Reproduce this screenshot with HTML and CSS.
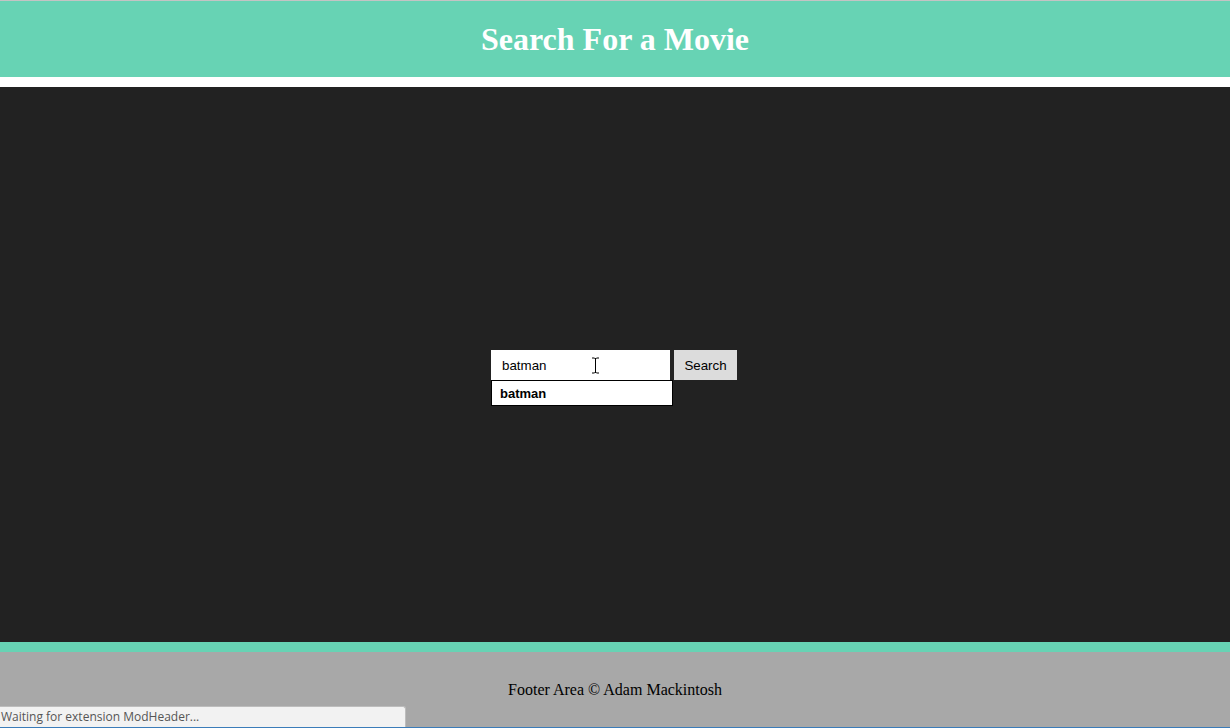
FILE: index.html
```html
<!DOCTYPE html>
<html>
<head>
<meta charset="utf-8">
<title>Search For a Movie</title>
<link rel="stylesheet" href="styles.css">
</head>
<body>
<header class="header"><h1 class="title">Search For a Movie</h1></header>
<main class="main">
  <form class="search">
    <div class="field">
      <input class="input" type="text" value="batman">
      <ul class="suggest"><li class="suggest-item">batman</li></ul>
      <svg class="cursor" width="9" height="17" viewBox="0 0 9 17"><path d="M1 1h2.5M5.5 1H8M4.5 1.5v14M1 16h2.5M5.5 16H8M3.5 1.5h2M3.5 15.5h2" stroke="#000" stroke-width="1" fill="none"/></svg>
    </div>
    <button class="btn" type="button">Search</button>
  </form>
</main>
<footer class="footer"><p class="footer-text">Footer Area © Adam Mackintosh</p></footer>
<div class="status">Waiting for extension ModHeader...</div>
<div class="bottom-line"></div>
</body>
</html>
```

FILE: styles.css
```css
html, body { margin: 0; padding: 0; height: 100%; }
body {
  display: flex;
  flex-direction: column;
  height: 728px;
  overflow: hidden;
  background: #fff;
  font-family: "Liberation Serif", serif;
  border-top: 1px solid #c4c4c4;
  box-sizing: border-box;
  position: relative;
}
.header {
  height: 76px;
  background: #67d3b4;
  display: flex;
  align-items: center;
  justify-content: center;
  margin-bottom: 10px;
  flex: none;
}
.title {
  margin: 0;
  color: #fff;
  font-size: 32px;
  font-weight: bold;
  font-family: "Liberation Serif", serif;
  line-height: 1;
}
.main {
  flex: 1;
  background: #222;
  display: flex;
  align-items: center;
  justify-content: center;
  padding-top: 1px;
  padding-right: 2px;
}
.search { display: flex; gap: 4px; }
.field { position: relative; }
.input {
  display: block;
  width: 179px;
  height: 30px;
  box-sizing: border-box;
  border: none;
  outline: none;
  padding: 0 0 0 11px;
  margin: 0;
  font-family: "Liberation Sans", Arial, sans-serif;
  font-size: 13.33px;
  color: #000;
  background: #fff;
}
.suggest {
  position: absolute;
  left: 0;
  top: 30px;
  width: 182px;
  height: 26px;
  box-sizing: border-box;
  margin: 0;
  padding: 0 0 0 8px;
  list-style: none;
  background: #fff;
  border: 1px solid #000;
  display: flex;
  align-items: center;
}
.suggest-item {
  font-family: "Liberation Sans", Arial, sans-serif;
  font-weight: bold;
  font-size: 13px;
  color: #000;
}
.cursor { position: absolute; left: 100px; top: 7px; }
.btn {
  height: 30px;
  width: 63px;
  border: none;
  background: #dcdcdc;
  margin: 0;
  padding: 0;
  font-family: "Liberation Sans", Arial, sans-serif;
  font-size: 13.33px;
  color: #000;
}
.footer {
  height: 76px;
  flex: none;
  background: #a8a8a8;
  border-top: 10px solid #67d3b4;
  display: flex;
  align-items: center;
  justify-content: center;
}
.footer-text {
  margin: 0;
  font-size: 16px;
  color: #000;
}
.status {
  position: absolute;
  left: 0;
  bottom: 1px;
  width: 406px;
  height: 21px;
  box-sizing: border-box;
  background: #f2f2f2;
  border: 1px solid #bdbdbd;
  border-left: none;
  border-bottom: none;
  border-top-right-radius: 3px;
  font-family: "Open Sans", "Noto Sans", sans-serif;
  font-size: 12px;
  color: #555;
  line-height: 20px;
  padding-left: 1px;
  white-space: nowrap;
}
.bottom-line {
  position: absolute;
  left: 0;
  right: 0;
  bottom: 0;
  height: 1px;
  background: #3b7cb9;
}
```
